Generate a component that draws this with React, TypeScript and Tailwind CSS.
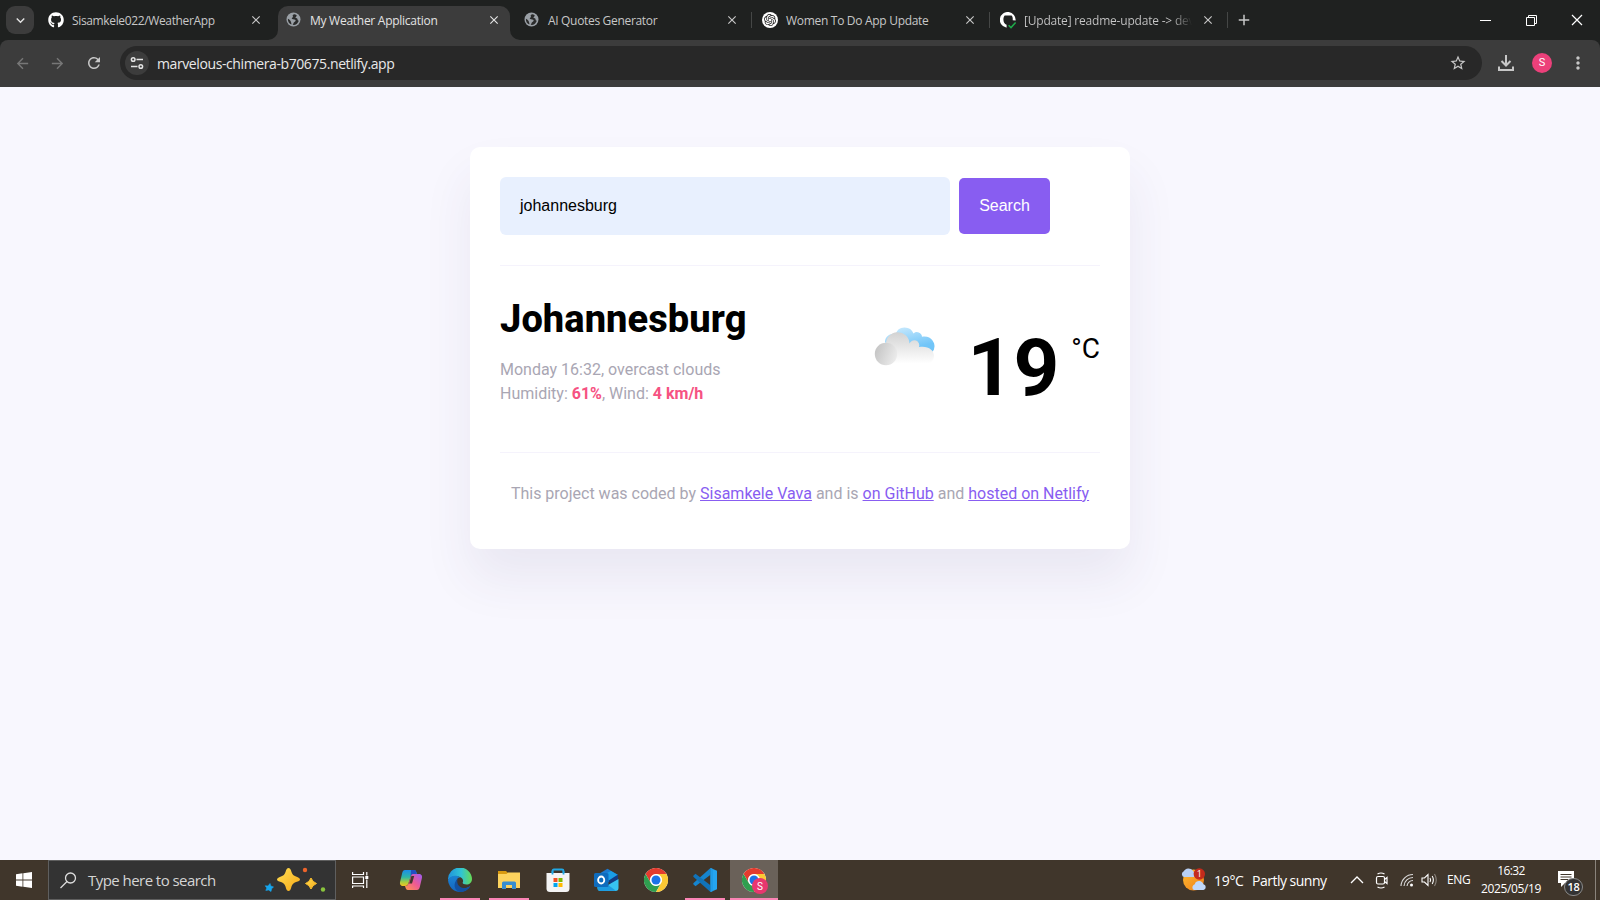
import type { ReactNode } from "react";
import { FaGithub } from "react-icons/fa";
import { SiOpenai } from "react-icons/si";
import { MdPublic, MdRefresh, MdStarBorder, MdMoreVert, MdArrowBack, MdArrowForward, MdClose, MdAdd, MdKeyboardArrowDown } from "react-icons/md";

type TabProps = { icon: ReactNode; title: string; titleClass: string; active?: boolean; divider?: boolean };

function Tab({ icon, title, titleClass, active, divider }: TabProps) {
  return (
    <div className="relative flex h-10 w-[238px] shrink-0 pt-1.5">
      <div
        className={
          active
            ? "relative flex h-[34px] w-[232px] items-center rounded-t-[10px] bg-[#3c3c3c] pb-1.5 pl-2"
            : "relative flex h-[34px] w-[232px] items-center pb-1.5 pl-2"
        }
      >
        {active && (
          <>
            <svg className="absolute -left-2.5 bottom-0" width="10" height="10"><path d="M10 0V10H0A10 10 0 0 0 10 0Z" fill="#3c3c3c" /></svg>
            <svg className="absolute -right-2.5 bottom-0" width="10" height="10"><path d="M0 0V10H10A10 10 0 0 1 0 0Z" fill="#3c3c3c" /></svg>
          </>
        )}
        <span className="flex w-6 shrink-0 items-center">{icon}</span>
        <span className="w-[176px] shrink-0 pt-0.5">
          <span className={titleClass}>{title}</span>
        </span>
        <span className={active ? "flex w-4 shrink-0 justify-center text-[#e3e3e3]" : "flex w-4 shrink-0 justify-center text-[#c7c7c7]"}>
          <MdClose size={14} />
        </span>
      </div>
      {divider && <span className="absolute top-3 right-0.5 h-4 w-[1.5px] bg-[#454746]" />}
    </div>
  );
}

const Globe = () => (
  <svg width="16" height="16" viewBox="0 0 16 16">
    <circle cx="7.5" cy="7.5" r="7" fill="#9aa0a6" />
    <path d="M8.8 2.2C7.2 2 6.3 3.2 6.8 4.2C7.6 5.6 5.6 5.2 5.8 6.6C6 7.6 8 7.2 9.2 7.8C10.2 8.4 9.4 9.6 8.4 10C7.4 10.4 7.6 12 6.6 12.8C8 13.2 9.6 12.8 10.6 12C11.8 11 12.4 10 12.8 8.6C12 8.8 11.4 8 11.6 7.2C11.8 6.4 10 6.4 9.4 5.6C9 5 10.6 4.8 10.8 3.4C10.2 2.8 9.6 2.4 8.8 2.2ZM1.9 6.8C3.2 7.6 4.6 8.2 4.8 9.6C5 10.6 5.6 10.8 5.4 12.6C3.4 11.8 1.6 9.6 1.9 6.8Z" fill="#2b2c2c" />
  </svg>
);

function TabStrip() {
  return (
    <div className="flex h-10 bg-[#1f2120]">
      <div className="flex w-10 items-start pt-1.5 pl-1.5">
        <div className="flex size-7 items-center justify-center rounded-[9px] bg-[#3c3c3c] text-[#e3e3e3]"><MdKeyboardArrowDown size={17} /></div>
      </div>
      <Tab icon={<FaGithub size={16} color="#fff" />} title="Sisamkele022/WeatherApp" titleClass="block whitespace-nowrap text-[12px] leading-4 tracking-[-0.36px] text-[#c7c7c7]" />
      <Tab active icon={<Globe />} title="My Weather Application" titleClass="block whitespace-nowrap text-[12px] leading-4 tracking-[-0.27px] text-[#e3e3e3]" />
      <Tab divider icon={<Globe />} title="AI Quotes Generator" titleClass="block whitespace-nowrap text-[12px] leading-4 tracking-[-0.32px] text-[#c7c7c7]" />
      <Tab
        divider
        icon={<span className="flex size-4 items-center justify-center rounded-full bg-white text-[#222]"><SiOpenai size={12} /></span>}
        title="Women To Do App Update"
        titleClass="block whitespace-nowrap text-[12px] leading-4 tracking-[-0.3px] text-[#c7c7c7]"
      />
      <Tab
        divider
        icon={
          <svg width="17" height="17" viewBox="0 0 17 17" fill="none">
            <path d="M6.6 15.2V12.7C4.4 12.2 3.4 10.2 3.4 7.6C3.4 5.6 3.9 4.2 4.7 3.4H11.6C12.6 4.3 12.9 6 12.7 8.2L15.6 8.6A7.9 7.9 0 1 0 6.1 15.6C6.5 15.7 6.6 15.5 6.6 15.2Z" fill="#fff" />
            <path d="M8.6 13.3L11 15.6L15.6 10.4" stroke="#1faa4a" strokeWidth="1.5" />
          </svg>
        }
        title="[Update] readme-update -> dev"
        titleClass="block w-[168px] whitespace-nowrap bg-linear-to-r from-[#c7c7c7] from-88% to-transparent bg-clip-text text-[12px] leading-4 tracking-[-0.2px] text-transparent"
      />
      <span className="flex w-8 items-center pl-[5px] text-[#c7c7c7]"><MdAdd size={18} /></span>
      <div className="ml-auto flex h-10 items-center text-white">
        <span className="flex w-[46px] justify-center"><svg width="11" height="11"><path d="M0 5.5H11" stroke="currentColor" /></svg></span>
        <span className="flex w-[46px] justify-center"><svg width="11" height="11" fill="none" stroke="currentColor"><path d="M.5 2.5h8v8h-8zM2.5 2.5v-2h8v8h-2" /></svg></span>
        <span className="flex w-[46px] justify-center"><svg width="12" height="12"><path d="M1 1L11 11M11 1L1 11" stroke="currentColor" strokeWidth="1.2" /></svg></span>
      </div>
    </div>
  );
}

function Toolbar() {
  return (
    <div className="bg-[#1f2120]">
      <div className="flex h-[47px] items-center rounded-t-lg bg-[#3c3c3c] pb-px">
        <span className="flex w-11 justify-center text-[#777]"><MdArrowBack size={17} /></span>
        <span className="flex w-[27px] justify-center text-[#777]"><MdArrowForward size={17} /></span>
        <span className="flex w-[46px] justify-center text-[#c7c7c7]"><MdRefresh size={18} /></span>
        <div className="ml-[3px] flex h-[34px] w-[1362px] items-center rounded-full bg-[#282828] pl-[5px]">
          <span className="flex size-6 items-center justify-center rounded-full bg-[#3c3c3c]">
            <svg width="14" height="14" fill="none" stroke="#e3e3e3" strokeWidth="1.5"><circle cx="3.2" cy="3.5" r="1.8" /><path d="M6.5 3.5H13M1 10.5H7.5" /><circle cx="10.8" cy="10.5" r="1.8" /></svg>
          </span>
          <span className="ml-2 text-[14px] tracking-[-0.4px] text-[#e8e8e8]">marvelous-chimera-b70675.netlify.app</span>
          <MdStarBorder size={18} className="mr-[15px] ml-auto text-[#c7c7c7]" />
        </div>
        <svg className="ml-[15px]" width="18" height="18" fill="none" stroke="#c7c7c7" strokeWidth="2"><path d="M9 1V11.5M4.5 7L9 11.5L13.5 7M2 12.5V16H16V12.5" /></svg>
        <span className="ml-[17px] flex size-5 items-center justify-center rounded-full bg-[#ec407a] font-[Roboto] text-[11px] text-white">S</span>
        <MdMoreVert size={20} className="ml-4 text-[#c7c7c7]" />
      </div>
    </div>
  );
}

function CloudIcon() {
  return (
    <svg className="mt-[29px]" width="64" height="44" viewBox="0 0 64 44">
      <defs>
        <linearGradient id="sky" x1="0" y1="0" x2="0.5" y2="1"><stop offset=".1" stopColor="#c8e9fd" /><stop offset=".9" stopColor="#71c5f8" /></linearGradient>
        <linearGradient id="gray" x1="0" y1="0" x2="0" y2="1"><stop offset="0" stopColor="#d2d2d2" /><stop offset=".95" stopColor="#fff" /></linearGradient>
        <linearGradient id="ball" x1="0" y1=".3" x2="1" y2=".7"><stop offset="0" stopColor="#c4c4c4" /><stop offset="1" stopColor="#ededed" /></linearGradient>
      </defs>
      <path d="M11 17A8 8 0 0 1 21.5 9.2A9.5 9.5 0 0 1 39.5 8.6A5 5 0 0 1 48 11.8C57 10 61 18 60.5 21.5Q60.5 25 58 27H18Z" fill="url(#sky)" />
      <path d="M12 40V19.5A11.5 11.5 0 0 1 35.5 18.5A5 5 0 0 1 45 22C54 20.5 60 25 60 31A9 9 0 0 1 51 40Z" fill="url(#gray)" />
      <circle cx="12" cy="29" r="11.2" fill="url(#ball)" />
    </svg>
  );
}

function WeatherCard() {
  return (
    <div className="h-[402px] w-[660px] rounded-[10px] bg-white px-[30px] pt-[30px] font-[Roboto] shadow-[0_30px_50px_0_rgba(65,50,100,0.08)]">
      <div className="flex h-[89px] items-start border-b border-[#f5f3fc]">
        <div className="flex h-[58px] w-[450px] items-center rounded-md bg-[#e8f0fe] pb-px pl-5 font-['Liberation_Sans'] text-base text-black">johannesburg</div>
        <button className="mt-px ml-[9px] h-14 w-[91px] rounded-[5px] bg-[#885df1] font-['Liberation_Sans'] text-base text-white">Search</button>
      </div>
      <div className="flex h-[187px] justify-between border-b border-[#f5f3fc] pt-[30px]">
        <div>
          <h1 className="text-[38px] leading-[46px] font-extrabold tracking-[0.08px] text-black">Johannesburg</h1>
          <p className="mt-4 text-base leading-6 text-[#a9a6b3]">
            Monday 16:32, overcast clouds<br />
            Humidity: <strong className="font-bold text-[#f65282]">61%</strong>, Wind: <strong className="font-bold text-[#f65282]">4 km/h</strong>
          </p>
        </div>
        <div className="flex items-start text-black">
          <CloudIcon />
          <span className="mt-[25px] ml-[30px] text-[80px] leading-[94px] font-bold">19</span>
          <span className="mt-[37px] ml-3 text-[28px] leading-8">°C</span>
        </div>
      </div>
      <p className="pt-[29px] text-center text-base leading-6 text-[#a9a6b3]">
        This project was coded by <a className="text-[#885df1] underline">Sisamkele Vava</a> and is <a className="text-[#885df1] underline">on GitHub</a> and{" "}
        <a className="text-[#885df1] underline">hosted on Netlify</a>
      </p>
    </div>
  );
}

function ChromeLogo() {
  return (
    <svg width="24" height="24" viewBox="0 0 24 24">
      <circle cx="12" cy="12" r="12" fill="#fff" />
      <path d="M12 6H22.4A12 12 0 0 0 1.6 6L6.8 15A6 6 0 0 1 12 6Z" fill="#e33b2e" />
      <path d="M6.8 15L1.6 6A12 12 0 0 0 12 24L17.2 15A6 6 0 0 1 6.8 15Z" fill="#2f9e4f" />
      <path d="M17.2 15L12 24A12 12 0 0 0 22.4 6H12A6 6 0 0 1 17.2 15Z" fill="#fcc934" />
      <circle cx="12" cy="12" r="5.7" fill="#fff" /><circle cx="12" cy="12" r="4.5" fill="#1a73e8" />
    </svg>
  );
}

function Copilot() {
  return (
    <svg width="24" height="22" viewBox="0 0 24 22">
      <defs>
        <linearGradient id="cpa" x1="0" y1="0" x2="0" y2="1"><stop offset="0" stopColor="#1b8dea" /><stop offset=".45" stopColor="#2fb6a5" /><stop offset=".75" stopColor="#a5ce42" /><stop offset="1" stopColor="#f4c321" /></linearGradient>
        <linearGradient id="cpb" x1="1" y1="0" x2="0" y2="1"><stop offset="0" stopColor="#9c5cf4" /><stop offset=".5" stopColor="#ee5a93" /><stop offset="1" stopColor="#ff9a4c" /></linearGradient>
      </defs>
      <path d="M6 1H15C17 1 17.3 3 18 5H14C12.5 5 12 6 11.5 8L9.5 14C9 16 8 17 6 17H4C1 17 .5 14.5 1.3 12L3.2 4C3.7 2 4.5 1 6 1Z" fill="url(#cpa)" />
      <path d="M12 1H15C17 1 17.3 3 18 5.5H14C12.5 5.5 12 6 11.5 8Z" fill="#1f4fc2" />
      <path d="M18 21H9C7 21 6.7 19 6 17C8.5 17 9 16 9.7 14L12 7C12.5 5.6 13 5 15 5H20C23 5 23.5 7.5 22.7 10L20.8 18C20.3 20 19.5 21 18 21Z" fill="url(#cpb)" />
      <path d="M10.2 14.5L12.4 7H15.2L13 14.5Z" fill="#41372d" />
    </svg>
  );
}

function Edge() {
  return (
    <svg width="24" height="24" viewBox="0 0 24 24">
      <defs>
        <linearGradient id="eda" x1="0" y1=".4" x2="1" y2=".4"><stop offset="0" stopColor="#1f93dc" /><stop offset=".55" stopColor="#31c4d4" /><stop offset="1" stopColor="#67dc55" /></linearGradient>
        <linearGradient id="edb" x1="0" y1="0" x2="0" y2="1"><stop offset="0" stopColor="#1b83d3" /><stop offset="1" stopColor="#1564bd" /></linearGradient>
      </defs>
      <path d="M0 12A12 12 0 0 1 24 11C24 14.5 21.5 16.5 18.5 16.5C16 16.5 14.4 15.7 14.7 14.5C15.6 13.3 15.2 10.5 12.5 9.2C8 7 2 8.5 0 12Z" fill="url(#eda)" />
      <path d="M0 12C2 7.3 8.5 6.5 12.3 9.3C8 9.5 7 15 10 18.3C13 21.2 18 21.3 22.4 17.7C17.5 26 6.5 26 2 18.3A12 12 0 0 1 0 12Z" fill="url(#edb)" />
      <path d="M10 10.5C8 14 10 19 15 20C18 20.7 20.5 19.3 22.4 17.7C20 22.5 16 24 12 24C6 23 4.5 15 10 10.5Z" fill="#1250a0" />
    </svg>
  );
}

function Folder() {
  return (
    <svg width="22" height="18" viewBox="0 0 22 18">
      <path d="M0 0H8L10 2H22V6H0Z" fill="#d99a10" /><path d="M0 3H8.5L10 1.5H22V17H0Z" fill="#fdd35e" />
      <path d="M4 18V12Q4 10.5 5.5 10.5H16.5Q18 10.5 18 12V18H14V14H8V18Z" fill="#378dd0" />
    </svg>
  );
}

function Store() {
  return (
    <svg width="24" height="24" viewBox="0 0 24 24">
      <path d="M6.5 7V3Q6.5 1.5 8 1.5H16Q17.5 1.5 17.5 3V7" fill="none" stroke="#21a8e4" strokeWidth="1.8" />
      <path d="M.5 5H23.5V20.5Q23.5 24 20 24H4Q.5 24 .5 20.5Z" fill="#f4f4f4" /><path d="M6.5 3V6.5M17.5 3V6.5" stroke="#21a8e4" strokeWidth="1.8" />
      <path d="M7.5 10H11.5V14H7.5Z" fill="#f25022" /><path d="M12.5 10H16.5V14H12.5Z" fill="#7fba00" /><path d="M7.5 15H11.5V19H7.5Z" fill="#00a4ef" /><path d="M12.5 15H16.5V19H12.5Z" fill="#ffb900" />
    </svg>
  );
}

function Outlook() {
  return (
    <svg width="25" height="24" viewBox="0 0 25 24">
      <path d="M3 7L13.5 .8L24 7V13H3Z" fill="#1b79cf" /><path d="M7 8L17 3L24 7V14H7Z" fill="#1a9de6" /><path d="M14 13L24 6.5V12L17 16Z" fill="#123b84" />
      <path d="M3.5 11L14 17L24.5 11V20Q24.5 23 21.5 23H6.5Q3.5 23 3.5 20Z" fill="#37c3f1" /><path d="M3.5 16L14 17L22 22.8L6.5 23Q3.5 23 3.5 20Z" fill="#1d9be0" />
      <rect y="5" width="14.5" height="14" rx="1.5" fill="#0f6cbd" /><ellipse cx="7.2" cy="12" rx="3.1" ry="3.5" fill="none" stroke="#fff" strokeWidth="1.8" />
    </svg>
  );
}

function VsCode() {
  return (
    <svg width="24" height="24" viewBox="0 0 24 24">
      <path d="M17.5 0L24 2.8V21.2L17.5 24Z" fill="#25a5f0" />
      <path d="M17.5 0V6.8L2.5 18.2L.3 16.3V15.2L17.5 0Z" fill="#1685cf" /><path d="M17.5 24V17.2L2.5 5.8L.3 7.7V8.8L17.5 24Z" fill="#1173b9" />
      <path d="M17.5 0L20 1V23L17.5 24Z" fill="#1f9ce8" />
    </svg>
  );
}

function TaskApp({ children, open, focused }: { children: ReactNode; open?: boolean; focused?: boolean }) {
  return (
    <div className={focused ? "ml-px flex h-10 w-12 flex-col items-center bg-[#6a6159]" : "flex h-10 w-[49px] flex-col items-center"}>
      <div className="flex h-[38px] items-center pt-0.5">{children}</div>
      {open && <span className={focused ? "h-0.5 w-12 bg-[#fb84b5]" : "h-0.5 w-10 bg-[#fb84b5]"} />}
    </div>
  );
}

function Sparkles() {
  return (
    <svg width="62" height="28" viewBox="0 0 62 28">
      <defs><linearGradient id="gold" x1="0" y1="0" x2="1" y2="1"><stop offset="0" stopColor="#ffdf55" /><stop offset="1" stopColor="#f5a817" /></linearGradient></defs>
      <path d="M24.5 2Q26.5 2 27.5 6Q28.5 9.5 32 10.5Q36 11.8 36 13.5Q36 15 32 16Q28.5 17 27.5 20.5Q26.5 25 24.5 25Q22.5 25 21.5 20.5Q20.5 17 17 16Q13 15 13 13.5Q13 11.8 17 10.5Q20.5 9.5 21.5 6Q22.5 2 24.5 2Z" fill="url(#gold)" />
      <path d="M47 12Q48.5 16 52.5 17.5Q48.5 19 47 23Q45.5 19 41.5 17.5Q45.5 16 47 12Z" fill="url(#gold)" stroke="#fbbf2c" strokeLinejoin="round" />
      <path d="M6 17.5L6.8 20L9.5 21L7.6 22.7L7 25.5L4.6 24L1.8 24.4L2.8 22L1.2 19.8L4 20Z" fill="#16a5ed" stroke="#16a5ed" strokeWidth=".6" strokeLinejoin="round" />
      <circle cx="41" cy="4" r="2.2" fill="#ee642b" /><circle cx="59" cy="23.5" r="2.2" fill="#89c43d" />
    </svg>
  );
}

function Taskbar() {
  return (
    <div className="flex h-10 bg-[#40362b] text-white">
      <div className="flex w-12 items-center justify-center">
        <svg width="16" height="16" fill="#fff"><path d="M0 2.2L6.5 1.3V7.6H0ZM7.3 1.2L16 0V7.6H7.3ZM0 8.4H6.5V14.7L0 13.8ZM7.3 8.4H16V16L7.3 14.8Z" /></svg>
      </div>
      <div className="flex h-10 w-72 items-center border border-[#5f5f5f] bg-[#333333] pl-[11px]">
        <svg width="17" height="17" fill="none" stroke="#ddd" strokeWidth="1.3"><circle cx="10.5" cy="6" r="5" /><path d="M7 9.5L.5 16" /></svg>
        <span className="ml-[11px] text-[15px] tracking-[-0.55px] text-[#d5d5d5]">Type here to search</span>
        <span className="mr-[9px] ml-auto"><Sparkles /></span>
      </div>
      <div className="flex w-[50px] items-center justify-center pr-px">
        <svg width="17" height="16" fill="none" stroke="#fff" strokeWidth="1.2"><path d="M.6 0V2.5H11.5V0M.6 5H11.5V11.5H.6ZM.6 16V14H11.5V16M14.8 0V3.5M14.8 7.5V16" /><path d="M13.3 4H16.3V7H13.3Z" fill="#fff" stroke="none" /></svg>
      </div>
      <TaskApp><Copilot /></TaskApp>
      <TaskApp open><Edge /></TaskApp>
      <TaskApp open><Folder /></TaskApp>
      <TaskApp><Store /></TaskApp>
      <TaskApp><Outlook /></TaskApp>
      <TaskApp><ChromeLogo /></TaskApp>
      <TaskApp open><VsCode /></TaskApp>
      <TaskApp open focused>
        <div className="relative">
          <ChromeLogo />
          <span className="absolute top-2.5 left-2.5 flex size-4 items-center justify-center rounded-full bg-[#e8376f] font-[Roboto] text-[10px] text-white">S</span>
        </div>
      </TaskApp>
      <div className="ml-auto flex items-center">
        <svg width="26" height="24" viewBox="0 0 26 24">
          <defs><linearGradient id="sun" x1="0" y1="0" x2="1" y2="1"><stop offset="0" stopColor="#fdbb31" /><stop offset="1" stopColor="#f07d18" /></linearGradient></defs>
          <circle cx="12.5" cy="12" r="10.5" fill="url(#sun)" />
          <path d="M3 9A3 3 0 0 1 2.5 3.5A5.5 5.5 0 0 1 12 3Q15 5 13 9Z" fill="#b8d0f5" />
          <path d="M13 22A3 3 0 0 1 12.5 17Q14 16.5 14.5 14.5A4.8 4.8 0 0 1 22.5 16.2A3 3 0 0 1 22.5 22Z" fill="#c0d8fb" />
          <circle cx="18.3" cy="6" r="5.7" fill="#c42b1c" /><text x="18.3" y="9.2" textAnchor="middle" fontSize="9" fill="#fff">1</text>
        </svg>
        <span className="ml-[7px] w-[37px] text-[14px] tracking-[-0.3px] whitespace-nowrap">19°C</span>
        <span className="ml-px w-[98px] text-[14px] tracking-[-0.5px] whitespace-nowrap">Partly sunny</span>
        <svg width="14" height="8" fill="none" stroke="#fff" strokeWidth="1.3"><path d="M1 7L7 1L13 7" /></svg>
        <svg className="ml-[11px]" width="14" height="17" fill="none" stroke="#fff" strokeWidth="1.2"><rect x="1.5" y="4.5" width="8" height="7.5" rx="1.5" /><path d="M9.5 7.5L12 5.5V11.5L9.5 9.5M2.5 2Q6 0 9.5 2M2.5 15Q6 17 9.5 15" /></svg>
        <svg className="ml-[11px]" width="14" height="14" fill="none" stroke="#ddd" strokeWidth="1.1"><path d="M1 13A12 12 0 0 1 13 1.5M4 13A9 9 0 0 1 13 4.5M7 13A6 6 0 0 1 13 7.5" /><circle cx="11.5" cy="12" r="1.5" fill="#fff" stroke="none" /></svg>
        <svg className="ml-[7px]" width="17" height="14" fill="none" stroke="#fff" strokeWidth="1.1"><path d="M1 5H3.5L7 1.5V12.5L3.5 9H1ZM9 5Q10.2 7 9 9M11.2 3Q13.5 7 11.2 11" /><path d="M13.5 1Q17 7 13.5 13" stroke="#8b857e" /></svg>
        <span className="ml-[9px] w-[26px] text-[12px] tracking-[-0.3px]">ENG</span>
        <span className="ml-[5px] flex w-[66px] flex-col items-center text-[12px] leading-[18px] tracking-[-0.35px] whitespace-nowrap"><span className="tracking-[-0.6px]">16:32</span><span>2025/05/19</span></span>
        <span className="relative ml-3.5 h-8 w-[37px]">
          <svg className="absolute top-[7px] left-0" width="16" height="17"><path d="M0 0H16V12H7L3 16V12H0Z" fill="#fff" /><path d="M2.5 3.5H13.5M2.5 6H13.5M2.5 8.5H10" stroke="#40362b" /></svg>
          <span className="absolute top-3.5 left-1.5 flex h-[18px] w-[19px] items-center justify-center rounded-full border border-[#8a8a8a] bg-[#333] text-[11px] font-semibold tracking-[-0.4px]">18</span>
        </span>
        <span className="mr-1 h-10 w-px bg-[#8a837b]" />
      </div>
    </div>
  );
}

export default function App() {
  return (
    <div className="flex h-[900px] w-[1600px] flex-col overflow-hidden bg-[#f8f7fe] font-['Open_Sans','Noto_Sans',sans-serif]">
      <TabStrip />
      <Toolbar />
      <main className="flex flex-1 justify-center bg-[#f8f7fe] pt-[60px]">
        <WeatherCard />
      </main>
      <Taskbar />
    </div>
  );
}
